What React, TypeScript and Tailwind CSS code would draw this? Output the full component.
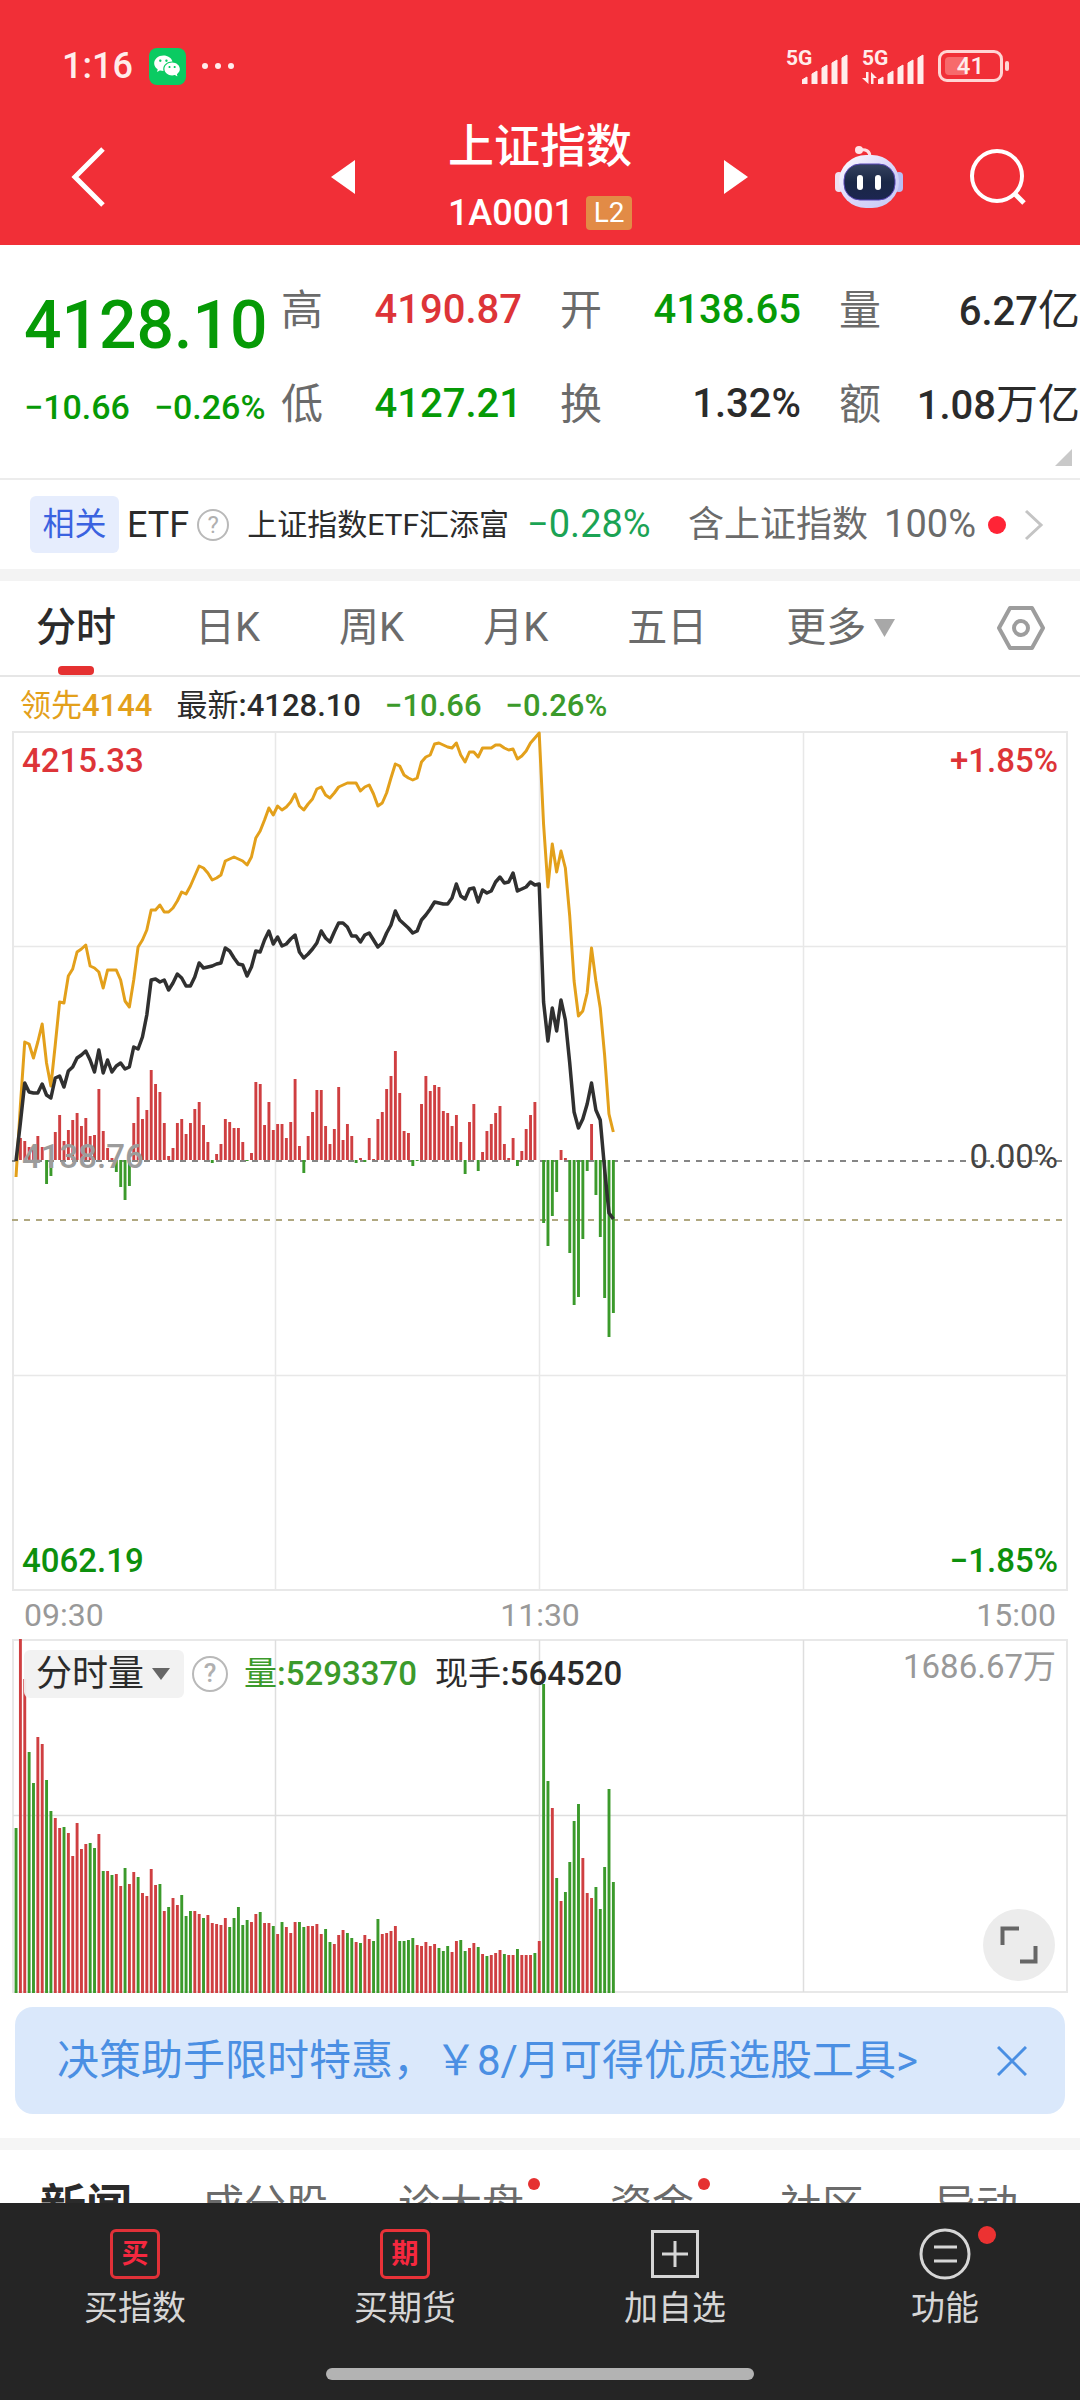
import clsx from 'clsx'
import { ReactNode, useState } from 'react'
import { RiWechatFill } from 'react-icons/ri'

const STEP = 4.36
const BASELINE = 429

// one entry per trading minute, y positions inside the 1056x860 plot
const leadLine = [
	446, 375, 311, 313, 327, 311, 293, 332, 355, 314, 271, 272, 245, 238, 221, 218, 214, 235, 237, 241,
	257, 239, 239, 239, 249, 270, 276, 249, 216, 209, 199, 179, 179, 174, 181, 181, 177, 170, 161, 163,
	155, 145, 135, 137, 142, 149, 147, 144, 130, 128, 126, 128, 130, 134, 126, 107, 100, 89, 77, 84,
	75, 79, 76, 71, 63, 75, 79, 73, 68, 58, 56, 64, 67, 62, 56, 54, 52, 52, 52, 60,
	56, 54, 63, 75, 72, 62, 47, 33, 35, 44, 47, 49, 47, 31, 26, 24, 13, 12, 14, 16,
	17, 12, 24, 31, 21, 21, 26, 17, 17, 17, 14, 14, 17, 19, 18, 28, 25, 20, 12, 7,
	2, 93, 156, 113, 141, 120, 137, 185, 250, 285, 280, 262, 217, 250, 277, 324, 383, 401
]

const priceLine = [
	430, 392, 352, 361, 362, 362, 353, 364, 367, 347, 345, 356, 340, 336, 327, 324, 320, 329, 341, 319,
	342, 329, 341, 335, 332, 338, 336, 316, 318, 306, 284, 249, 248, 251, 249, 259, 252, 243, 247, 255,
	255, 246, 232, 237, 236, 235, 233, 232, 217, 220, 227, 233, 234, 245, 236, 220, 221, 209, 200, 213,
	206, 215, 213, 208, 204, 221, 227, 223, 218, 212, 200, 207, 211, 201, 192, 192, 196, 205, 205, 211,
	204, 202, 209, 216, 212, 202, 194, 180, 189, 193, 197, 202, 200, 189, 184, 178, 171, 172, 173, 173,
	167, 153, 165, 168, 158, 157, 171, 159, 162, 160, 151, 146, 152, 151, 142, 160, 158, 156, 151, 154,
	153, 271, 310, 277, 300, 269, 289, 332, 381, 397, 388, 373, 352, 379, 389, 438, 482, 488
]

const momentum = [
	0, 22, 19, 13, 14, 24, 13, -24, -16, 28, 45, 19, 30, 40, 47, 34, 42, 24, 25, 71,
	29, 12, 2, -12, -27, -40, -26, 37, 63, 41, 50, 90, 76, 68, 37, 4, 12, 37, 41, 26,
	37, 51, 58, 35, 18, -3, 6, 16, 41, 38, 32, 32, 18, -1, 7, 78, 76, 35, 58, 30,
	36, 36, 22, 38, 81, 14, -13, 24, 48, 70, 70, 34, 16, 31, 73, 20, 36, 24, -3, 2,
	-2, 22, 1, 41, 48, 71, 84, 109, 67, 29, 27, -6, -1, 56, 84, 69, 75, 73, 49, 47,
	34, 45, 18, -14, 38, 56, -11, 8, 29, 36, 47, 54, 16, 2, 22, -6, 9, 31, 45, 58,
	0, -63, -86, -56, -32, 10, 2, -93, -145, -137, -79, -11, 36, -35, -77, -138, -177, -153
]

// negative = falling minute, drawn green
const volume = [
	-165, 354, 314, -241, -210, 256, 249, -213, -182, 175, 165, -166, 160, 137, 170, 144, 149, -150, -145, 159,
	-122, 122, -118, 119, 107, -125, 109, 121, -116, 100, 97, 124, 108, -109, 82, -86, 95, 88, -98, -77,
	-82, 82, 79, -75, 78, 70, 69, 68, 75, -66, -75, -86, -68, -73, 71, 79, -81, 70, 70, -67,
	59, -71, 66, 60, 71, -71, -66, 67, 67, 69, 59, -64, -51, 49, 58, 63, -60, -55, 51, -50,
	58, 54, -52, -74, 59, 60, 62, 67, -52, -52, -53, -55, 48, 47, 51, 47, 49, -45, -42, -47,
	41, 52, -53, -42, 45, 50, -46, 39, -37, 38, 40, 43, -39, 38, 38, -44, 38, 38, 38, -40,
	52, -309, -212, 185, -115, 92, -101, -131, -172, -189, 135, 100, 95, -106, -84, -126, -204, -111
]

const quotes = [
	{ label: '高', value: '4190.87', color: 'text-[#dd3438]' },
	{ label: '开', value: '4138.65', color: 'text-[#069a06]' },
	{ label: '量', value: '6.27', unit: '亿', color: 'text-[#2b2b2b]' },
	{ label: '低', value: '4127.21', color: 'text-[#069a06]' },
	{ label: '换', value: '1.32%', color: 'text-[#2b2b2b]' },
	{ label: '额', value: '1.08', unit: '万亿', color: 'text-[#2b2b2b]' }
]

const periods = ['分时', '日K', '周K', '月K', '五日']

const sections = [
	{ name: '新闻', dot: false },
	{ name: '成分股', dot: false },
	{ name: '诊大盘', dot: true },
	{ name: '资金', dot: true },
	{ name: '社区', dot: false },
	{ name: '异动', dot: false }
]

const toPoints = (ys: number[]) => ys.map((y, i) => `${4 + i * STEP},${y}`).join(' ')

function Signal({ active }: { active?: boolean }) {
	return (
		<div className="relative flex h-9 w-[62px] items-end justify-end">
			<span className="absolute top-0 left-0 text-[21px] leading-5 font-bold">5G</span>
			{active && (
				<svg viewBox="0 0 16 12" className="absolute bottom-0 left-0 h-3 w-4 fill-current">
					<path d="M4 0h2.500v12L0 6h4zM9 0l6 6h-3.500v6H9z" />
				</svg>
			)}
			<svg viewBox="0 0 46 30" className="h-[30px] w-[46px] fill-current">
				{[7, 13, 19, 24, 29].map((h, i) => (
					<path key={i} d={`M${i * 10} 30v${3 - h}l5 -3v${h}z`} stroke="currentColor" strokeLinejoin="round" />
				))}
			</svg>
		</div>
	)
}

function StatusBar() {
	return (
		<div className="flex h-10 items-center pr-[71px] pl-[62px] text-[#ffeceb]">
			<time className="text-4xl font-medium">1:16</time>
			<span className="ml-4 flex h-[37px] w-[37px] items-center justify-center rounded-lg bg-[#0acb62]">
				<RiWechatFill className="h-7 w-7 text-white" />
			</span>
			<span className="ml-4 flex gap-[7px]">
				<i className="h-1.5 w-1.5 rounded-full bg-current" />
				<i className="h-1.5 w-1.5 rounded-full bg-current" />
				<i className="h-1.5 w-1.5 rounded-full bg-current" />
			</span>
			<div className="ml-auto flex items-center gap-3.5">
				<Signal />
				<Signal active />
				<div className="flex items-center gap-0.5">
					<div className="relative flex h-8 w-[65px] items-center justify-center rounded-[9px] border-3 border-[#ffd5d3]">
						<i className="absolute top-1 left-1 h-[18px] w-[22px] rounded-l bg-[#f76a6c]" />
						<span className="relative text-2xl leading-6 font-medium">41</span>
					</div>
					<i className="h-2.5 w-1 rounded-full bg-[#ffd5d3]" />
				</div>
			</div>
		</div>
	)
}

function RobotIcon() {
	return (
		<svg viewBox="0 0 68 64" className="h-16 w-[68px]">
			<defs>
				<linearGradient id="shell" x1="0" y1="0" x2="1" y2="1">
					<stop offset="0" stopColor="#ffffff" />
					<stop offset="0.5" stopColor="#dcd8fa" />
					<stop offset="1" stopColor="#c3c8f5" />
				</linearGradient>
				<linearGradient id="visor" x1="0" y1="0" x2="0" y2="1">
					<stop offset="0" stopColor="#35425f" />
					<stop offset="0.5" stopColor="#1a2746" />
					<stop offset="1" stopColor="#1c2650" />
				</linearGradient>
			</defs>
			<rect x="0" y="27" width="8" height="20" rx="4" fill="#f0dff0" />
			<rect x="60" y="27" width="8" height="20" rx="4" fill="#b9bdf3" />
			<path d="M25 5c6-1 10 1 10 7" fill="none" stroke="#ffdfe4" strokeWidth="3" />
			<circle cx="24" cy="5" r="4" fill="#ffe4e8" />
			<rect x="4" y="10" width="60" height="53" rx="27" fill="url(#shell)" />
			<rect x="9" y="19" width="51" height="36" rx="16" fill="url(#visor)" stroke="#5b49b8" />
			<rect x="22" y="30" width="6" height="15" rx="3" fill="#fff" />
			<rect x="40" y="30" width="6" height="15" rx="3" fill="#fff" />
		</svg>
	)
}

function HelpIcon({ className }: { className: string }) {
	return (
		<span
			className={clsx(
				'flex items-center justify-center rounded-full border-2 border-[#b9b9b9] text-[#b0b0b0]',
				className
			)}>
			?
		</span>
	)
}

function Header() {
	return (
		<header className="bg-[#f12f37] pt-[46px] pb-3 text-white">
			<StatusBar />
			<div className="mt-[35px] grid grid-cols-3 items-center">
				<div className="flex items-center justify-between pr-[5px] pl-[70px]">
					<button aria-label="返回">
						<svg viewBox="0 0 36 62" className="h-[62px] w-9">
							<path d="M33 3L5 31l28 28" fill="none" stroke="currentColor" strokeWidth="5" />
						</svg>
					</button>
					<button aria-label="上一个">
						<svg viewBox="0 0 24 34" className="h-[34px] w-6 fill-current">
							<path d="M24 0v34L0 17z" />
						</svg>
					</button>
				</div>
				<div className="text-center">
					<h1 className="text-[46px] leading-[50px] font-medium">上证指数</h1>
					<p className="mt-[22px] flex h-10 items-center justify-center gap-3 text-4xl font-medium">
						1A0001
						<span className="flex h-[34px] w-[46px] items-center justify-center rounded-sm bg-[#e28b46] text-[28px] font-normal">
							L2
						</span>
					</p>
				</div>
				<div className="flex items-center pr-[53px] pl-1">
					<button aria-label="下一个">
						<svg viewBox="0 0 24 34" className="h-[34px] w-6 fill-current">
							<path d="M0 0v34l24-17z" />
						</svg>
					</button>
					<div className="ml-auto flex items-center gap-[66px]">
						<button aria-label="智能助手">
							<RobotIcon />
						</button>
						<button aria-label="搜索">
							<svg viewBox="0 0 58 58" className="h-[58px] w-[58px]">
								<g fill="none" stroke="currentColor" strokeWidth="4">
									<circle cx="28" cy="28" r="25" />
									<path d="M46 46l9 9" strokeWidth="5" />
								</g>
							</svg>
						</button>
					</div>
				</div>
			</div>
		</header>
	)
}

function Quote() {
	return (
		<section className="relative flex h-[235px] border-b-2 border-[#ececec]">
			<div className="w-[281px] shrink-0 pt-[43px] pl-6 font-medium text-[#069a06]">
				<p className="text-[66px] leading-[76px]">4128.10</p>
				<p className="mt-[18px] flex gap-6 text-[34px] leading-[50px]">
					<span>−10.66</span>
					<span>−0.26%</span>
				</p>
			</div>
			<dl className="grid flex-1 grid-cols-3 content-start gap-x-[38px] gap-y-[34px] pt-[35px]">
				{quotes.map(quote => (
					<div key={quote.label} className="flex h-[60px] items-center justify-between">
						<dt className="text-[42px] text-[#6b6b6b]">{quote.label}</dt>
						<dd className={clsx('text-[40px] font-medium whitespace-nowrap', quote.color)}>
							{quote.value}
							{quote.unit && <span className="text-[42px] font-normal">{quote.unit}</span>}
						</dd>
					</div>
				))}
			</dl>
			<svg viewBox="0 0 17 17" className="absolute right-2 bottom-3 h-[17px] w-[17px] fill-[#c9c9c9]">
				<path d="M17 0v17H0z" />
			</svg>
		</section>
	)
}

function RelatedFund() {
	return (
		<a href="#etf" className="flex h-[89px] items-center pr-9 pl-[30px] text-4xl whitespace-nowrap">
			<span className="flex h-[57px] w-[89px] items-center justify-center rounded-md bg-[#e6edfd] text-[32px] text-[#3a62e0]">
				相关
			</span>
			<span className="ml-2 text-[#2b2b2b]">ETF</span>
			<HelpIcon className="ml-2 h-8 w-8 text-2xl" />
			<span className="ml-[18px] text-[30px] text-[#2b2b2b]">上证指数ETF汇添富</span>
			<span className="ml-[18px] text-[38px] text-[#1ba354]">−0.28%</span>
			<span className="ml-auto flex items-center text-[#6b6b6b]">
				含上证指数
				<span className="ml-4 text-[38px]">100%</span>
				<i className="ml-3 h-[18px] w-[18px] rounded-full bg-[#ff2436]" />
				<svg viewBox="0 0 20 32" className="ml-[18px] h-8 w-5">
					<path d="M2 2l15 14L2 30" fill="none" stroke="#c4c4c4" strokeWidth="3" />
				</svg>
			</span>
		</a>
	)
}

function PeriodTabs() {
	const [active, setActive] = useState('分时')

	return (
		<nav className="flex h-[96px] items-center gap-[79px] border-b-2 border-[#e6e6e6] pr-[35px] pl-9 text-[40px] whitespace-nowrap text-[#6b6b6b]">
			{periods.map(period => (
				<button
					key={period}
					onClick={() => setActive(period)}
					className={clsx('relative h-full', active === period && 'font-medium text-[#2b2b2b]')}>
					{period}
					{active === period && (
						<i className="absolute bottom-0 left-1/2 h-[9px] w-9 -translate-x-1/2 rounded bg-[#e53131]" />
					)}
				</button>
			))}
			<button className="flex items-center gap-2">
				更多
				<svg viewBox="0 0 21 18" className="h-[18px] w-[21px] fill-[#a8a8a8]">
					<path d="M0 0h21L10.500 18z" />
				</svg>
			</button>
			<button aria-label="设置" className="ml-auto">
				<svg viewBox="0 0 48 44" className="h-11 w-12">
					<g fill="none" stroke="#9d9d9d" strokeWidth="4" strokeLinejoin="round">
						<path d="M13 2h22l11 20-11 20H13L2 22z" />
						<circle cx="24" cy="22" r="7" />
					</g>
				</svg>
			</button>
		</nav>
	)
}

function PriceChart() {
	return (
		<div className="relative text-[33px] leading-9 font-medium">
			<svg viewBox="0 0 1056 860" className="block h-auto w-full">
				<g fill="none" stroke="#e8e8e8" strokeWidth="2">
					<rect x="1" y="1" width="1054" height="858" />
					<path d="M263.500 1v858M527.500 1v858M791.500 1v858M1 215.500h1054M1 644.500h1054" strokeWidth="1.500" />
				</g>
				<path d={`M0 ${BASELINE + 1}h1056`} stroke="#858585" strokeWidth="2" strokeDasharray="6 6" />
				<path d="M0 489h1056" stroke="#b0a880" strokeWidth="2" strokeDasharray="6 6" />
				{momentum.map((m, i) => (
					<rect
						key={i}
						x={2.6 + i * STEP}
						y={m > 0 ? BASELINE - m : BASELINE}
						width="2.900"
						height={Math.abs(m)}
						fill={m > 0 ? '#cf3f41' : '#3b9a2b'}
					/>
				))}
				<g fill="none" strokeLinejoin="round">
					<polyline points={toPoints(leadLine)} stroke="#e3a01b" strokeWidth="3" />
					<polyline points={toPoints(priceLine)} stroke="#303030" strokeWidth="3.500" />
				</g>
			</svg>
			<span className="absolute top-3 left-2.5 text-[#dd3438]">4215.33</span>
			<span className="absolute top-3 right-2.5 text-[#dd3438]">+1.85%</span>
			<span className="absolute top-1/2 left-2.5 -translate-y-[22px] text-[#9c9c9c]">4138.76</span>
			<span className="absolute top-1/2 right-2.5 -translate-y-[22px] font-normal text-[#444]">0.00%</span>
			<span className="absolute bottom-3 left-2.5 text-[#0d900d]">4062.19</span>
			<span className="absolute right-2.5 bottom-3 text-[#0d900d]">−1.85%</span>
		</div>
	)
}

function VolumeChart() {
	return (
		<div className="relative">
			<svg viewBox="0 0 1056 354" className="block h-auto w-full">
				<g fill="none" stroke="#e8e8e8" strokeWidth="2">
					<rect x="1" y="1" width="1054" height="352" />
					<path d="M263.500 1v352M527.500 1v352M791.500 1v352M1 176.500h1054" stroke="#dedede" strokeWidth="1.500" />
				</g>
				{volume.map((v, i) => (
					<rect
						key={i}
						x={2.6 + i * STEP}
						y={354 - Math.abs(v)}
						width="2.900"
						height={Math.abs(v)}
						fill={v > 0 ? '#cf3f41' : '#3b9a2b'}
					/>
				))}
			</svg>
			<div className="absolute top-2.5 left-3 flex items-center text-[33px] font-medium">
				<label className="relative flex items-center">
					<select
						aria-label="指标"
						className="h-12 w-40 appearance-none rounded-md bg-[#f1f1f1]/95 pl-3 text-4xl leading-[48px] font-normal text-[#2b2b2b]">
						<option>分时量</option>
					</select>
					<svg viewBox="0 0 18 12" className="absolute right-3.5 h-3 w-[18px] fill-[#666]">
						<path d="M0 0h18L9 12z" />
					</svg>
				</label>
				<HelpIcon className="ml-2 h-9 w-9 text-[26px]" />
				<span className="ml-4 text-[#3b9a2b]">
					<span className="font-normal">量</span>:5293370
				</span>
				<span className="ml-[18px] text-[#2b2b2b]">
					<span className="font-normal">现手</span>:564520
				</span>
			</div>
			<span className="absolute top-2.5 right-3 text-[33px] leading-9 text-[#999]">1686.67万</span>
			<button
				aria-label="全屏"
				className="absolute right-[13px] bottom-3 flex h-[72px] w-[72px] items-center justify-center rounded-full bg-[#ececec]">
				<svg viewBox="0 0 38 38" className="h-[38px] w-[38px]">
					<path d="M2.500 19V2.500H19M35.500 20v15.500H20" fill="none" stroke="#666" strokeWidth="4" />
				</svg>
			</button>
		</div>
	)
}

function NavItem({ label, children }: { label: string; children: ReactNode }) {
	return (
		<button className="flex flex-1 flex-col items-center text-[34px] leading-10 text-[#d6d6d6]">
			<span className="relative mb-2 flex h-[52px] w-[52px] items-center justify-center">{children}</span>
			{label}
		</button>
	)
}

function BottomNav() {
	return (
		<footer className="bg-[#252525] pt-[25px] pb-5">
			<nav className="flex">
				<NavItem label="买指数">
					<span className="flex h-[50px] w-[50px] items-center justify-center rounded-md border-3 border-[#e03138] text-[27px] leading-none font-bold text-[#f5283f]">
						买
					</span>
				</NavItem>
				<NavItem label="买期货">
					<span className="flex h-[50px] w-[50px] items-center justify-center rounded-md border-3 border-[#e93238] text-[27px] leading-none font-bold text-[#f5283f]">
						期
					</span>
				</NavItem>
				<NavItem label="加自选">
					<svg viewBox="0 0 48 48" className="h-12 w-12">
						<path d="M1.500 1.500h45v45h-45zM24 11v26M11 24h26" fill="none" stroke="#d6d6d6" strokeWidth="3" />
					</svg>
				</NavItem>
				<NavItem label="功能">
					<svg viewBox="0 0 52 52" className="h-[52px] w-[52px]">
						<g fill="none" stroke="#d6d6d6" strokeWidth="3">
							<circle cx="26" cy="26" r="24" />
							<path d="M15 19h23M15 33h23" />
						</g>
					</svg>
					<i className="absolute -top-0.5 -right-[25px] h-[18px] w-[18px] rounded-full bg-[#ec3232]" />
				</NavItem>
			</nav>
			<div className="mx-auto mt-10 h-3 w-[428px] rounded-full bg-[#b3b3b3]" />
		</footer>
	)
}

export default function App() {
	const [showBanner, setShowBanner] = useState(true)

	return (
		<div className="flex h-screen flex-col bg-white font-[family-name:Roboto,'Noto_Sans_CJK_SC',sans-serif]">
			<Header />
			<main className="min-h-0 flex-1 overflow-hidden">
				<Quote />
				<RelatedFund />
				<div className="h-3 bg-[#f3f3f3]" />
				<PeriodTabs />
				<p className="flex h-[54px] items-center pt-1 pl-5 text-[31px] font-medium whitespace-nowrap text-[#3b9a2b]">
					<span className="text-[#e3a01b]">
						<span className="font-normal">领先</span>4144
					</span>
					<span className="ml-6 text-[#2b2b2b]">
						<span className="font-normal">最新</span>:4128.10
					</span>
					<span className="ml-6">−10.66</span>
					<span className="ml-6">−0.26%</span>
				</p>
				<section className="px-3">
					<PriceChart />
					<div className="flex h-12 items-center justify-between px-3 text-[32px] text-[#999]">
						<time>09:30</time>
						<time>11:30</time>
						<time>15:00</time>
					</div>
					<VolumeChart />
				</section>
				{showBanner && (
					<aside className="mx-[15px] mt-3.5 flex h-[107px] items-center justify-between rounded-[18px] bg-[#dae8fb] pr-[38px] pl-[42px] text-[42px] whitespace-nowrap text-[#4a8fe3]">
						<a href="#promo">决策助手限时特惠，￥8/月可得优质选股工具&gt;</a>
						<button aria-label="关闭" onClick={() => setShowBanner(false)}>
							<svg viewBox="0 0 30 30" className="h-[30px] w-[30px]">
								<path d="M1 1l28 28M29 1L1 29" stroke="currentColor" strokeWidth="3" />
							</svg>
						</button>
					</aside>
				)}
				<div className="mt-6 h-3 bg-[#f5f5f5]" />
				<nav className="flex gap-[70px] pt-[26px] pl-10 text-[42px] leading-[60px] whitespace-nowrap text-[#6b6b6b]">
					{sections.map((section, i) => (
						<button
							key={section.name}
							className={clsx(
								'relative',
								i === 0 && 'text-[46px] font-bold text-[#2b2b2b]',
								section.dot && 'pr-4'
							)}>
							{section.name}
							{section.dot && <i className="absolute top-0.5 right-0 h-3 w-3 rounded-full bg-[#e53131]" />}
						</button>
					))}
				</nav>
			</main>
			<BottomNav />
		</div>
	)
}
